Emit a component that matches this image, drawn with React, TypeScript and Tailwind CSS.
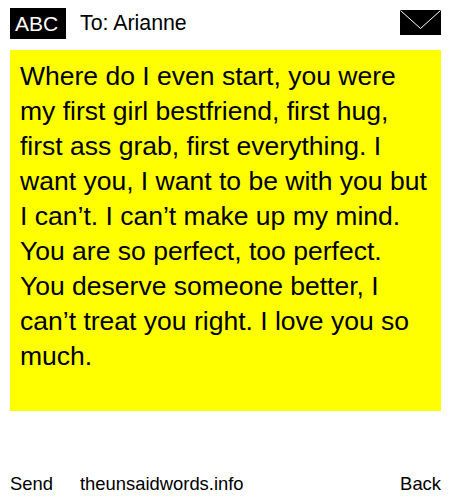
export default function App() {
  return (
    <div className="flex h-[500px] w-[450px] flex-col bg-white font-['Liberation_Sans',Arial,sans-serif] text-black">
      <div className="flex items-start pl-[10px] pr-[9px] pt-2">
        <div className="flex h-[31px] w-[56px] items-center bg-black pl-[5px] text-[21px] text-white">ABC</div>
        <p className="ml-[14px] h-[31px] text-[21.33px] leading-[31px]">To: Arianne</p>
        <svg className="ml-auto mt-[2px]" width="41" height="25" viewBox="0 0 41 25" aria-hidden="true">
          <rect width="41" height="25" fill="#000" />
          <path d="M0.5 0.5 L20.5 18.5 L40.5 0.5" fill="none" stroke="#fff" strokeWidth="1" />
        </svg>
      </div>
      <div className="ml-[10px] mt-[11px] h-[361px] w-[431px] bg-[#ffff00] px-[10px] pt-[9px] text-[26.53px] leading-[35px]">
        Where do I even start, you were my first girl bestfriend, first hug, first ass grab, first everything. I want you, I want to be with you but I can’t. I can’t make up my mind. You are so perfect, too perfect. You deserve someone better, I can’t treat you right. I love you so much.
      </div>
      <div className="mt-[61px] flex pl-[10px] pr-[9px] text-[18.4px] leading-[24px]">
        <span className="w-[70px]">Send</span>
        <span>theunsaidwords.info</span>
        <span className="ml-auto">Back</span>
      </div>
    </div>
  )
}
